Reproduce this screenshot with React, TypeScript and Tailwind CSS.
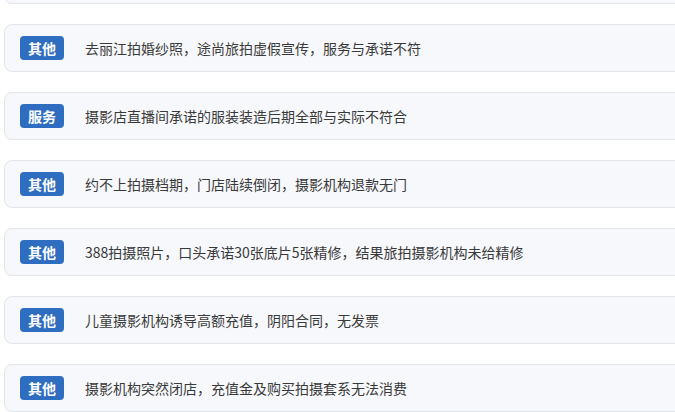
const items = [
  { tag: "其他", text: "去丽江拍婚纱照，途尚旅拍虚假宣传，服务与承诺不符" },
  { tag: "服务", text: "摄影店直播间承诺的服装装造后期全部与实际不符合" },
  { tag: "其他", text: "约不上拍摄档期，门店陆续倒闭，摄影机构退款无门" },
  { tag: "其他", text: "388拍摄照片，口头承诺30张底片5张精修，结果旅拍摄影机构未给精修" },
  { tag: "其他", text: "儿童摄影机构诱导高额充值，阴阳合同，无发票" },
  { tag: "其他", text: "摄影机构突然闭店，充值金及购买拍摄套系无法消费" },
];

export default function App() {
  return (
    <div
      className="w-[675px] h-[412px] overflow-hidden bg-white"
      style={{ fontFamily: '"Microsoft YaHei", "Noto Sans CJK SC", "Noto Sans", sans-serif' }}
    >
      <div className="ml-[4px] w-[720px] -mt-[44px] flex flex-col gap-[20px]">
        <div className="h-[48px] rounded-[8px] border border-[#e1e4e9] bg-[#f7f8fb]" />
        {items.map((it, i) => (
          <div
            key={i}
            className="h-[48px] rounded-[8px] border border-[#e1e4e9] bg-[#f7f8fb] flex items-center pl-[15px]"
          >
            <span className="w-[44px] h-[24px] rounded-[4px] bg-[#2f6dc1] text-white text-[14px] font-bold flex items-center justify-center leading-none">
              {it.tag}
            </span>
            <span className="ml-[21px] text-[14px] text-[#3a3a3a] leading-none">{it.text}</span>
          </div>
        ))}
      </div>
    </div>
  );
}
